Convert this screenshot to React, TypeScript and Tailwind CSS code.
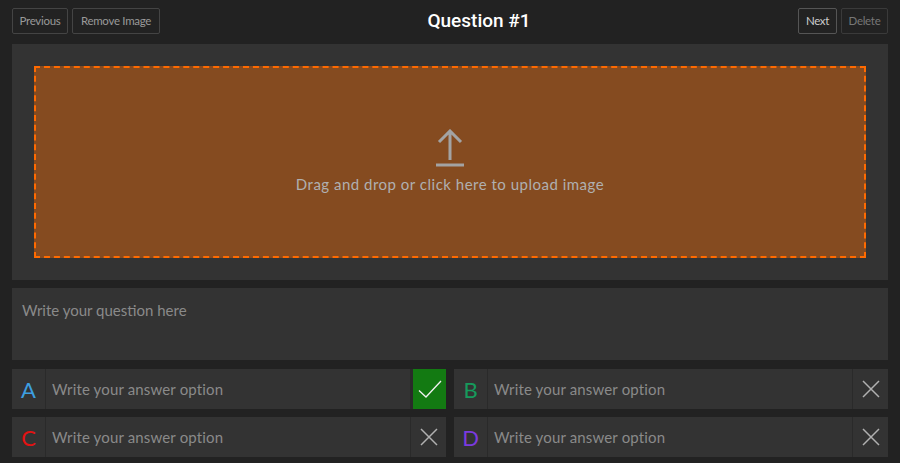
import React from "react";

const font = { fontFamily: "Lato, 'Noto Sans', sans-serif" };

function CheckIcon() {
  return (
    <svg width="24" height="24" viewBox="0 0 24 24" fill="none" stroke="#f2f2f2" strokeWidth="1.3">
      <path d="M1 13.5 L8 20 L23 4" />
    </svg>
  );
}

function XIcon() {
  return (
    <svg width="20" height="20" viewBox="0 0 20 20" fill="none" stroke="#b0b0b0" strokeWidth="1.5">
      <path d="M2 2 L18 18 M18 2 L2 18" />
    </svg>
  );
}

function AnswerRow({ letter, color, correct }: { letter: string; color: string; correct?: boolean }) {
  return (
    <div className="flex h-10 bg-[#2a2a2a]">
      <div className={`w-[33px] flex items-center justify-center bg-[#333] text-[22px] ${color}`}>{letter}</div>
      <input
        className="ml-px flex-1 min-w-0 bg-[#333] px-[6px] text-[15px] tracking-[0.15px] text-[#ccc] placeholder:text-[#8a8a8a] outline-none"
        placeholder="Write your answer option"
      />
      {correct ? (
        <button className="ml-[3px] w-[33px] flex items-center justify-center bg-[#137a12]">
          <CheckIcon />
        </button>
      ) : (
        <button className="ml-px w-[35px] flex items-center justify-center bg-[#333]">
          <XIcon />
        </button>
      )}
    </div>
  );
}

export default function App() {
  return (
    <div className="min-h-screen bg-[#222] px-3 pt-2" style={font}>
      <div className="flex h-[26px] items-center">
        <div className="flex gap-1">
          <button className="h-[26px] w-[56px] border border-[#444] rounded-[2px] text-[11.5px] tracking-[-0.3px] text-[#999]">
            Previous
          </button>
          <button className="h-[26px] w-[88px] border border-[#444] rounded-[2px] text-[11.5px] tracking-[-0.3px] text-[#999]">
            Remove Image
          </button>
        </div>
        <h1 className="flex-1 text-center text-[19px] font-medium text-white" style={{ fontFamily: "Roboto, sans-serif" }}>
          Question #1
        </h1>
        <div className="flex gap-1">
          <button className="h-[26px] w-[39px] border border-[#555] rounded-[2px] text-[11.5px] tracking-[-0.3px] text-[#ccc]">
            Next
          </button>
          <button className="h-[26px] w-[47px] border border-[#3a3a3a] rounded-[2px] text-[11.5px] tracking-[-0.3px] text-[#777]">
            Delete
          </button>
        </div>
      </div>

      <div className="mt-[10px] h-[236px] bg-[#333] p-[22px]">
        <div className="flex h-full flex-col items-center justify-center border-2 border-dashed border-[#ff6a00] bg-[#854b20] cursor-pointer">
          <svg width="32" height="38" viewBox="0 0 32 38" fill="none" stroke="#a3a3a3" strokeWidth="3">
            <path d="M16 2 V31 M5 13 L16 2 L27 13" />
            <path d="M2 36 H30" />
          </svg>
          <div className="mt-[6px] text-[15px] tracking-[0.5px] text-[#b0b0b0]">Drag and drop or click here to upload image</div>
        </div>
      </div>

      <textarea
        className="mt-2 block h-[72px] w-full resize-none bg-[#333] px-[10px] py-[11px] text-[15px] text-[#ccc] placeholder:text-[#8a8a8a] outline-none"
        placeholder="Write your question here"
      />

      <div className="mt-[9px] grid grid-cols-2 gap-2">
        <AnswerRow letter="A" color="text-[#3d9fe0]" correct />
        <AnswerRow letter="B" color="text-[#169a5c]" />
        <AnswerRow letter="C" color="text-[#e31212]" />
        <AnswerRow letter="D" color="text-[#7b3ae0]" />
      </div>
    </div>
  );
}
